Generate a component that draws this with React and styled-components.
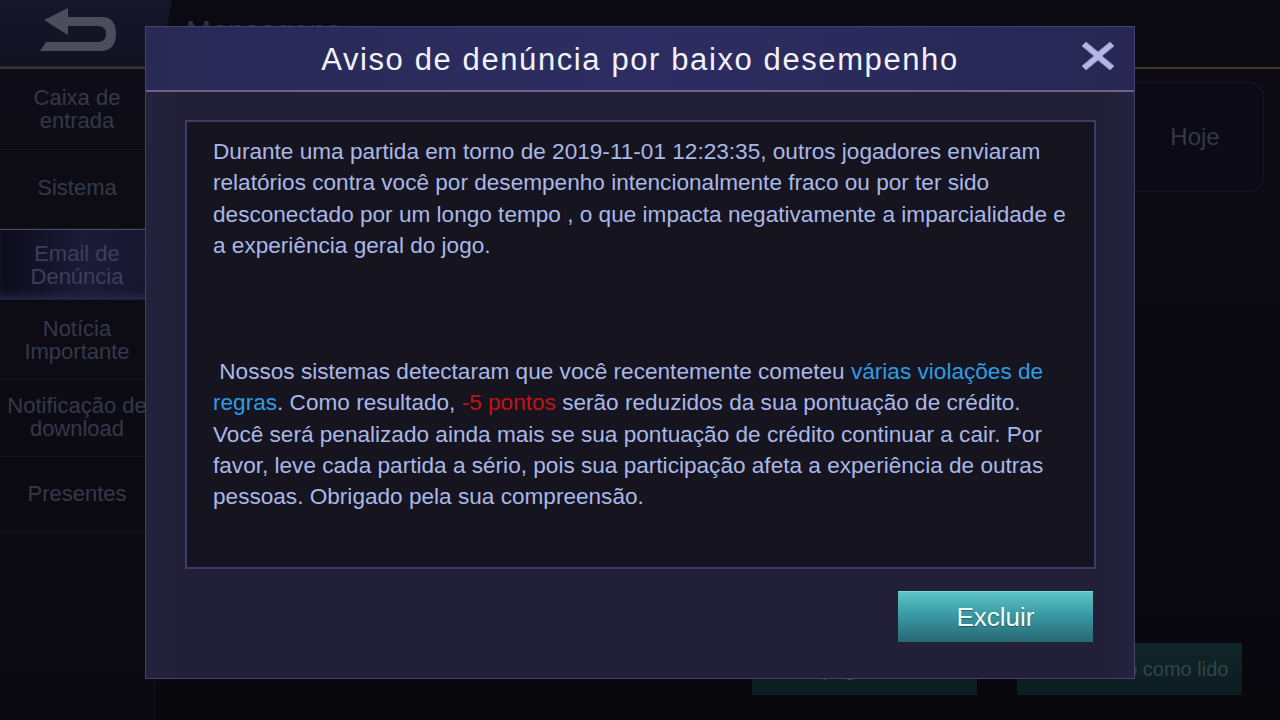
import styled, { createGlobalStyle } from 'styled-components'

const GlobalStyle = createGlobalStyle`
    html, body {
        margin: 0;
        padding: 0;
        width: 1280px;
        height: 720px;
        overflow: hidden;
        background: #08070d;
        font-family: "Liberation Sans", Arial, sans-serif;
    }
`

const Page = styled.div`
    position: relative;
    width: 1280px;
    height: 720px;
    display: flex;
    flex-direction: column;
    background: linear-gradient(180deg, #0c0b14 0%, #08070c 100%);
    overflow: hidden;
`

const Header = styled.div`
    height: 67px;
    display: flex;
    align-items: stretch;
    border-bottom: 2px solid #3e3522;
    background: #0b0a13;
`

const BackButton = styled.div`
    width: 172px;
    display: flex;
    align-items: center;
    justify-content: center;
    padding: 0 14px 4px 0;
    box-sizing: border-box;
    background: linear-gradient(180deg, #151628 0%, #111222 100%);
    clip-path: polygon(0 0, 100% 0, 92% 100%, 0 100%);
    border-bottom: 1px solid #1f2340;
`

const HeaderTitle = styled.div`
    padding: 14px 0 0 14px;
    font-size: 30px;
    color: #2e3042;
`

const Main = styled.div`
    flex: 1;
    display: flex;
`

const Sidebar = styled.div`
    width: 154px;
    border-right: 1px solid #14131e;
    background: linear-gradient(180deg, #0e0d17 0%, #0a0910 100%);
    display: flex;
    flex-direction: column;
`

const SideItem = styled.div`
    box-sizing: border-box;
    height: ${p => p.$h || 76}px;
    display: flex;
    align-items: center;
    justify-content: center;
    text-align: center;
    font-size: 22px;
    line-height: 23px;
    white-space: pre;
    padding-bottom: ${p => p.$lift || 0}px;
    color: ${p => p.$active ? '#3a405a' : '#343849'};
    border-bottom: 1px solid ${p => p.$active ? '#1e1f38' : '#16151f'};
    border-top: ${p => p.$active ? '1px solid #4a4d66' : 'none'};
    background: ${p => p.$active
        ? 'linear-gradient(90deg, #0d0c1a 0%, #1b1b38 55%, #16162e 100%)'
        : 'transparent'};
    box-shadow: ${p => p.$active ? 'inset 0 -6px 10px -4px #2a2c55' : 'none'};
`

const Content = styled.div`
    flex: 1;
    display: flex;
    flex-direction: column;
    padding: 13px 16px 25px 16px;
`

const MailRow = styled.div`
    height: 110px;
    display: flex;
    justify-content: flex-end;
    align-items: center;
    background: #0c0b15;
    border-radius: 0 14px 14px 0;
    box-shadow: inset -1px 1px 0 #15152a, inset -1px -1px 0 #15152a;
`

const DateLabel = styled.div`
    width: 138px;
    text-align: center;
    font-size: 24px;
    color: #343848;
`

const Footer = styled.div`
    margin-top: auto;
    display: flex;
    justify-content: flex-end;
    gap: 40px;
    padding-right: 22px;
`

const GhostButton = styled.div`
    width: 225px;
    height: 52px;
    display: flex;
    align-items: center;
    justify-content: center;
    font-size: 20px;
    white-space: nowrap;
    color: #36434a;
    background: linear-gradient(180deg, #10262a 0%, #0c1b1f 100%);
`

const Layer = styled.div`
    position: absolute;
    inset: 0;
    display: flex;
    justify-content: center;
    align-items: flex-start;
    padding-top: 26px;
`

const Modal = styled.div`
    width: 990px;
    height: 653px;
    box-sizing: border-box;
    border: 1px solid #46426e;
    background: linear-gradient(90deg, #25223e 0%, #221f38 4%, #221f38 96%, #25223e 100%);
    display: flex;
    flex-direction: column;
`

const ModalHeader = styled.div`
    position: relative;
    height: 63px;
    display: flex;
    align-items: center;
    justify-content: center;
    background: linear-gradient(90deg, #292955 0%, #2d2d63 50%, #272753 100%);
    border-bottom: 2px solid #6a6488;
`

const ModalTitle = styled.h1`
    margin: 2px 0 0 0;
    font-weight: 400;
    font-size: 31px;
    letter-spacing: 1.6px;
    color: #f2f2f8;
`

const CloseButton = styled.div`
    position: absolute;
    right: 18px;
    top: 11px;
    width: 36px;
    height: 36px;
    display: flex;
`

const Body = styled.div`
    flex: 1;
    display: flex;
    flex-direction: column;
    padding: 28px 38px 36px 39px;
`

const MessageBox = styled.div`
    height: 449px;
    box-sizing: border-box;
    border: 2px solid #3d3b6e;
    background: #16141f;
    padding: 14px 26px 0 26px;
    font-size: 22.6px;
    line-height: 31.4px;
    color: #a9b8e8;
    white-space: pre-wrap;
`

const Highlight = styled.span`
    color: ${p => p.$tone === 'red' ? '#c41212' : '#2d9de2'};
`

const Actions = styled.div`
    margin-top: auto;
    display: flex;
    justify-content: flex-end;
    padding-right: 3px;
`

const ConfirmButton = styled.button`
    width: 195px;
    height: 51px;
    border: none;
    border-top: 1px solid #7ad8da;
    background: linear-gradient(180deg, #5cc4c7 0%, #3a9aa4 45%, #276775 100%);
    font-family: "Liberation Sans", Arial, sans-serif;
    font-size: 26px;
    color: #f4fbfb;
    text-shadow: 0 1px 1px rgba(0, 40, 50, 0.5);
`

const BackArrow = () => (
    <svg width="82" height="48" viewBox="0 0 82 48">
        <path d="M6 13 L30 1 L30 10 L64 10 Q78 10 78 27 Q78 44 62 44 L2 44 L8 35 L60 35 Q68 35 68 27 Q68 19 60 19 L30 19 L30 28 Z"
              fill="#4c4d5c" />
    </svg>
)

const CloseIcon = () => (
    <svg width="36" height="36" viewBox="0 0 36 36">
        <path d="M6 4 L18 14 L30 4 L34 8 L22 18 L34 28 L30 32 L18 22 L6 32 L2 28 L14 18 L2 8 Z"
              fill="#b4b6e2" stroke="#8e90c4" strokeWidth="1" strokeLinejoin="round" />
    </svg>
)

const menu = [
    { label: 'Caixa de\nentrada', h: 81 },
    { label: 'Sistema', h: 79, lift: 4 },
    { label: 'Email de\nDenúncia', h: 71, active: true },
    { label: 'Notícia\nImportante', h: 80 },
    { label: 'Notificação de\ndownload', h: 77, lift: 2 },
    { label: 'Presentes', h: 76, lift: 2 },
]

const App = () => {
    return (
        <>
            <GlobalStyle />
            <Page>
                <Header>
                    <BackButton>
                        <BackArrow />
                    </BackButton>
                    <HeaderTitle>Mensagens</HeaderTitle>
                </Header>
                <Main>
                    <Sidebar>
                        {menu.map(item => (
                            <SideItem key={item.label} $h={item.h} $lift={item.lift} $active={item.active}>
                                {item.label}
                            </SideItem>
                        ))}
                    </Sidebar>
                    <Content>
                        <MailRow>
                            <DateLabel>Hoje</DateLabel>
                        </MailRow>
                        <Footer>
                            <GhostButton>Apagar lidos</GhostButton>
                            <GhostButton>Marcar tudo como lido</GhostButton>
                        </Footer>
                    </Content>
                </Main>

                <Layer>
                    <Modal>
                        <ModalHeader>
                            <ModalTitle>Aviso de denúncia por baixo desempenho</ModalTitle>
                            <CloseButton>
                                <CloseIcon />
                            </CloseButton>
                        </ModalHeader>
                        <Body>
                            <MessageBox>
                                {'Durante uma partida em torno de 2019-11-01 12:23:35, outros jogadores enviaram relatórios contra você por desempenho intencionalmente fraco ou por ter sido desconectado por um longo tempo , o que impacta negativamente a imparcialidade e a experiência geral do jogo.\n\n\n\n Nossos sistemas detectaram que você recentemente cometeu '}
                                <Highlight>várias violações de regras</Highlight>
                                {'. Como resultado, '}
                                <Highlight $tone="red">-5 pontos</Highlight>
                                {' serão reduzidos da sua pontuação de crédito. Você será penalizado ainda mais se sua pontuação de crédito continuar a cair. Por favor, leve cada partida a sério, pois sua participação afeta a experiência de outras pessoas. Obrigado pela sua compreensão.'}
                            </MessageBox>
                            <Actions>
                                <ConfirmButton>Excluir</ConfirmButton>
                            </Actions>
                        </Body>
                    </Modal>
                </Layer>
            </Page>
        </>
    )
}

export default App
